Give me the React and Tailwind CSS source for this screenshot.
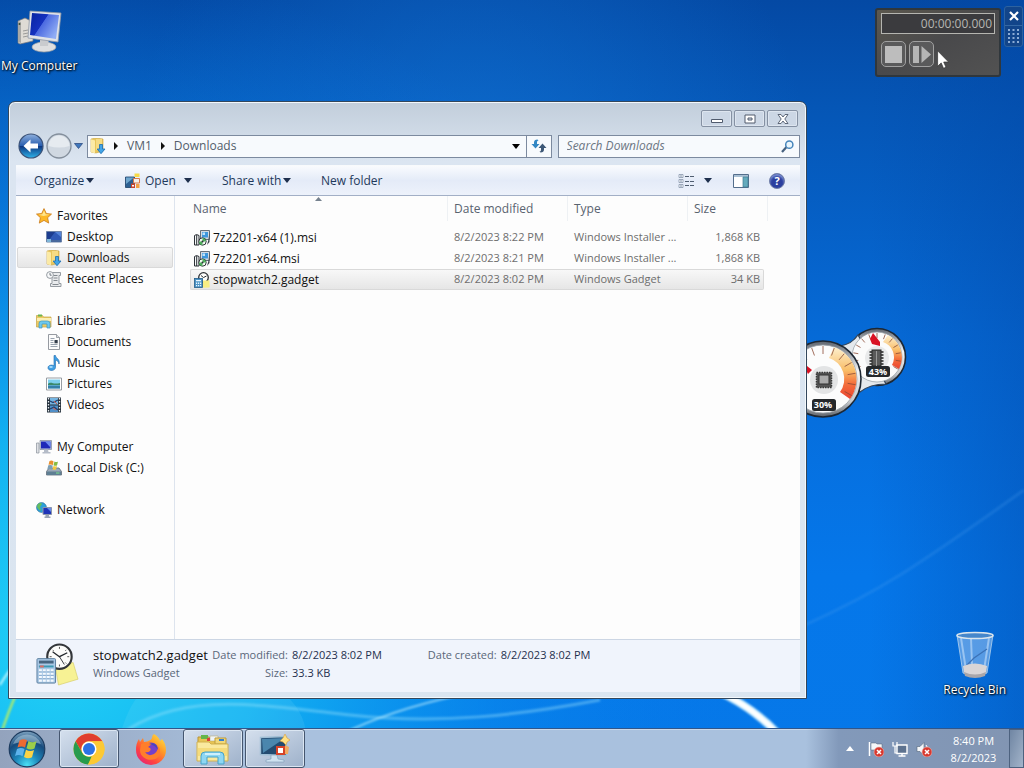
import React from "react";

const Svg = ({ box = "0 0 16 16", className = "w-4 h-4", children }) => (
  <svg viewBox={box} className={`shrink-0 ${className}`} aria-hidden="true">
    {children}
  </svg>
);

const Caret = ({ className = "text-[#1e2f4d]" }) => (
  <Svg box="0 0 8 5" className={`w-2 h-[5px] ${className}`}>
    <path d="M0 0h8L4 5z" fill="currentColor" />
  </Svg>
);

const StarIcon = () => (
  <Svg>
    <path d="M8 .6l2.3 4.9 5.2.6-3.9 3.6 1.1 5.4L8 12.4l-4.7 2.7 1.1-5.4L.5 6.1l5.2-.6z" fill="#fdb827" stroke="#c97a1c" strokeWidth=".8" />
    <path d="M8 2.5l1.6 3.8 3.9.5-6 1.2-4.8-1.2 3.7-.5z" fill="#ffe58c" />
  </Svg>
);

const DesktopIcon = () => (
  <Svg>
    <path d="M.5 2.500h15v10.500H.5z" fill="#2f59b5" stroke="#6d83a8" />
    <path d="M1 3h8L3 11H1z" fill="#1c3d8f" />
    <path d="M9 3h6v5z" fill="#5484d8" />
    <path d="M1 11h14v2H1z" fill="#49699c" />
    <path d="M1 10h4v3H1z" fill="#7fb7d9" />
  </Svg>
);

const DownloadsIcon = () => (
  <Svg>
    <path d="M1 1l5-1 7 1v12l-7 2-5-1z" fill="#e8c65c" stroke="#c9a23c" strokeWidth=".6" />
    <path d="M1 1.200l4 1.300v13L1 14z" fill="#fbeaa6" />
    <path d="M6 1h6v11H6z" fill="#f6dc84" />
    <path d="M9.500 6.500h3v4.500h2.500L11 15.700 7.200 11h2.300z" fill="#42a5e8" stroke="#1b6db0" strokeWidth=".8" />
  </Svg>
);

const RecentIcon = () => (
  <Svg>
    <path d="M5 1.500h9.500v3H13v8h2v3H4.500v-3H6v-11z" fill="#e9ebed" stroke="#8b9298" strokeWidth=".9" />
    <path d="M7.500 4.500h4M7.500 7h4M7.500 9.500h4M6.500 13.500h6" stroke="#777e85" strokeWidth=".9" />
    <circle cx="4" cy="4" r="3.400" fill="#f8f9fa" stroke="#8b9298" strokeWidth=".9" />
    <path d="M4 2v2.200h1.700" fill="none" stroke="#54606a" strokeWidth=".8" />
  </Svg>
);

const LibrariesIcon = () => (
  <Svg>
    <path d="M.5 2.500h6l1 1.500h7.500v10H.5z" fill="#eccb62" stroke="#c4a245" strokeWidth=".7" />
    <path d="M2 1.500h4v2H2z" fill="#6cb44c" />
    <path d="M1 5h14v3H1z" fill="#fbeeb4" />
    <path d="M3 15V10.500a2.500 2.500 0 012.500-2.500h6A2.500 2.500 0 0114 10.500V15h-3v-4H6v4z" fill="#6ec8ec" stroke="#3d97c2" strokeWidth=".7" />
  </Svg>
);

const DocumentIcon = () => (
  <Svg>
    <path d="M2.500.500h8l3 3v12h-11z" fill="#fcfcfc" stroke="#8a8f96" strokeWidth=".9" />
    <path d="M10.500.5v3h3" fill="#d9dde2" stroke="#8a8f96" strokeWidth=".8" />
    <path d="M4.500 4.500h4M4.500 6.500h3M4.500 8.500h3M4.500 10.500h7M4.500 12.500h7" stroke="#8d98a6" strokeWidth=".9" />
    <path d="M8.500 6h3.200v3.300H8.500z" fill="#333d4a" />
  </Svg>
);

const MusicIcon = () => (
  <Svg>
    <path d="M8 .5h1.500c.3 3 4.800 3.500 3.500 8.500-.5-2.500-1.700-3.500-3.500-3.700v7c0 4-7.500 4.200-7.500.5C2 10 6 9.500 8 10.800z" fill="#3f9fe4" stroke="#1d68ad" strokeWidth=".6" />
    <ellipse cx="5" cy="12" rx="1.800" ry="1" fill="#a6dbfb" />
  </Svg>
);

const PictureIcon = () => (
  <Svg>
    <path d="M.5 2h15v12H.5z" fill="#fff" stroke="#8c9299" strokeWidth=".9" />
    <path d="M2 3.500h12v9H2z" fill="#7ed0ee" />
    <path d="M2 8c3-3 5 1 12-1v2H2z" fill="#3c8a6b" />
    <path d="M2 9.500h12v3H2z" fill="#357fa8" />
  </Svg>
);

const VideoIcon = () => (
  <Svg>
    <path d="M1 .5h14v15H1z" fill="#26323e" />
    <path d="M4 1h8v6.500H4z" fill="#75b5e2" />
    <path d="M4 8.500h8V15H4z" fill="#4f8fc8" />
    <path d="M4 4l3 1.500L12 3M4 12l4-2 4 3" stroke="#23406e" strokeWidth="1.300" fill="none" />
    <path d="M8 4l3 3M7 11l3 2" stroke="#d55a4a" />
    <path d="M2.500 1v14M13.500 1v14" stroke="#e8edf2" strokeWidth="1.300" strokeDasharray="1.500 1.500" />
  </Svg>
);

const ComputerIcon = () => (
  <Svg>
    <path d="M.5 4h2.500v10H.5z" fill="#e0e2e6" stroke="#888f99" strokeWidth=".7" />
    <path d="M4 1.500h11.500v9H4z" fill="#c5cddc" stroke="#7c879a" strokeWidth=".7" />
    <path d="M5 2.500h9.500v7H5z" fill="#1e28b8" />
    <path d="M9 2.500h5.500v6z" fill="#6d8bef" />
    <path d="M8 10.500h4l.5 2.500h2v1.500h-8V13h1.500z" fill="#b5bcc8" />
  </Svg>
);

const DiskIcon = () => (
  <Svg>
    <path d="M3 8h10l2.500 3.500v3.500H.5v-3.500z" fill="#9ba9b8" stroke="#5c6977" strokeWidth=".8" />
    <path d="M1 11.500h14V15H1z" fill="#5f7f93" />
    <path d="M10 13h3.500" stroke="#7ee58c" />
    <path d="M3.500 1q2-1 4 .3L7 5Q5 4 2.500 4.800z" fill="#e9902f" />
    <path d="M8.500 1.500q2 1 3.500 0L11 5.500q-2 .8-3.500-.3z" fill="#86bb42" />
    <path d="M2.300 5.300q2.500-.8 4.500.3l-1 3.900q-2-1-4.500-.2z" fill="#7d9fb4" />
    <path d="M7.500 6q2 .8 3.500 0L10 9.500q-2 .8-3.500-.3z" fill="#f5c83c" />
  </Svg>
);

const NetworkIcon = () => (
  <Svg>
    <circle cx="5.500" cy="5.500" r="5" fill="#2c9fd9" stroke="#276589" strokeWidth=".5" />
    <path d="M2 2q3-2 4 0L4 5l1 4Q1 7 1 4z" fill="#65be5e" />
    <path d="M7 5.500h8.500v7H7z" fill="#1f34b8" stroke="#8c96ab" />
    <path d="M11 6h4v4z" fill="#668bec" />
    <path d="M9.500 13h3.500v1.500h1.500V16h-6v-1.500h1z" fill="#9aa4b4" />
  </Svg>
);

const InstallerIcon = () => (
  <Svg>
    <path d="M6.500.500h9v9h-9z" fill="#d4dbe3" stroke="#59636d" strokeWidth=".9" />
    <path d="M8 2h6v5.500H8z" fill="#3f97dc" />
    <path d="M8.500 2.500h2.500v2.500H8.500z" fill="#bfe2fa" />
    <path d="M14.500 9.500l1-8.500v11l-2.500 3" fill="#3d454e" />
    <path d="M.5 5.500l2-1 2.500 1v9.500H.5z" fill="#f6f7f8" stroke="#2b3036" strokeWidth="1" />
    <path d="M2.700 5v10" stroke="#2b3036" strokeWidth="1" />
    <circle cx="8.500" cy="11.500" r="3.700" fill="#f3faf2" stroke="#2b3036" strokeWidth="1" />
    <path d="M8.500 8a3.500 3.500 0 013.500 3.500H8.500zM8.500 15a3.500 3.500 0 01-3.500-3.500h3.500z" fill="#4eb05c" />
    <circle cx="8.500" cy="11.500" r="1" fill="#2b3036" />
  </Svg>
);

const GadgetArt = ({ className }) => (
  <Svg box="0 0 44 44" className={className}>
    <path d="M20 25l18-5 5 17-20 6z" fill="#f7f294" stroke="#d7cf6c" strokeWidth=".7" />
    <circle cx="24" cy="14" r="12.500" fill="#fcfcfa" stroke="#33363a" strokeWidth="2.200" />
    <path d="M24 4v2M24 22v2M14 14h2M32 14h2M17 7l1 1M31 7l-1 1M31 21l-1-1" stroke="#555" strokeWidth="1" />
    <path d="M17 9l7 5 8-4" fill="none" stroke="#22262b" strokeWidth="1.300" />
    <path d="M24 14l5 8" stroke="#22262b" strokeWidth=".9" />
    <rect x="1" y="16" width="19" height="25" rx="1" fill="#a9c8e6" stroke="#5c7f9f" strokeWidth="1" />
    <path d="M3 18h15v3H3z" fill="#46647f" />
    <path d="M3 23h15v2H3z" fill="#3d99b3" />
    <path d="M4 23h4v2H4z" fill="#db6e64" />
    <path d="M3 28h15M3 31.500h15M3 35h15M3 38.500h15" stroke="#f4f9fe" strokeWidth="2.300" strokeDasharray="3 1" />
    <path d="M3 29.500h15M3 33h15M3 36.500h15" stroke="#6f94b8" strokeWidth=".6" strokeDasharray="3 1" />
  </Svg>
);

const GadgetSmall = () => (
  <Svg>
    <path d="M8 8h6.500l1 7-7 .5z" fill="#f7ee83" />
    <circle cx="9.500" cy="5.500" r="4.800" fill="#fdfdfb" stroke="#2b2f34" strokeWidth="1.300" />
    <path d="M7 3.500l2.500 2 3-1.500" fill="none" stroke="#2b2f34" />
    <path d="M9 8.500h6.500v7H9z" fill="#f7ee83" />
    <rect x=".5" y="6.500" width="8" height="9" fill="#4d94c6" stroke="#235d88" strokeWidth=".8" />
    <path d="M2 8h5v1.300H2zM2 10.500h1.200V12H2zM4 10.500h1.200V12H4zM6 10.500h1.200V12H6zM2 13h1.200v1.300H2zM4 13h1.200v1.300H4zM6 13h1.200v1.300H6z" fill="#e7f6ff" />
  </Svg>
);

const OpenIcon = () => (
  <Svg>
    <path d="M.5 4h9v10.500h-9z" fill="#2c5f92" stroke="#1c4068" strokeWidth=".8" />
    <path d="M1 4.500h8L1 11z" fill="#6ea5cd" />
    <path d="M9.500.500h5V4h-5z" fill="#f6da4a" />
    <path d="M8.500 5.500h6v4.500h-6z" fill="#f4f1ee" stroke="#d97a4a" strokeWidth="1" />
    <path d="M6 10.500h4V15H6z" fill="#c7432f" />
    <path d="M11 11h3.500v4H11z" fill="#f4a245" />
    <path d="M7 12h2v1.500H7z" fill="#fff" />
  </Svg>
);

const treeSections = [
  { label: "Favorites", Icon: StarIcon, items: [
    { label: "Desktop", Icon: DesktopIcon },
    { label: "Downloads", Icon: DownloadsIcon, active: true },
    { label: "Recent Places", Icon: RecentIcon },
  ] },
  { label: "Libraries", Icon: LibrariesIcon, items: [
    { label: "Documents", Icon: DocumentIcon },
    { label: "Music", Icon: MusicIcon },
    { label: "Pictures", Icon: PictureIcon },
    { label: "Videos", Icon: VideoIcon },
  ] },
  { label: "My Computer", Icon: ComputerIcon, items: [{ label: "Local Disk (C:)", Icon: DiskIcon }] },
  { label: "Network", Icon: NetworkIcon, items: [] },
];

const files = [
  { name: "7z2201-x64 (1).msi", date: "8/2/2023 8:22 PM", type: "Windows Installer ...", size: "1,868 KB", Icon: InstallerIcon },
  { name: "7z2201-x64.msi", date: "8/2/2023 8:21 PM", type: "Windows Installer ...", size: "1,868 KB", Icon: InstallerIcon },
  { name: "stopwatch2.gadget", date: "8/2/2023 8:02 PM", type: "Windows Gadget", size: "34 KB", Icon: GadgetSmall, selected: true },
];

function Wallpaper() {
  return (
    <svg className="absolute inset-0 w-full h-full" viewBox="0 0 1024 768" preserveAspectRatio="none" aria-hidden="true">
      <defs>
        <linearGradient id="base" x1="0" y1="0" x2="0" y2="1">
          <stop offset="0" stopColor="#0449a4" />
          <stop offset=".14" stopColor="#0556b6" />
          <stop offset=".45" stopColor="#066bd8" />
          <stop offset=".75" stopColor="#0577ea" />
          <stop offset="1" stopColor="#0678e8" />
        </linearGradient>
        <radialGradient id="cyan" gradientUnits="userSpaceOnUse" cx="60" cy="640" r="680">
          <stop offset="0" stopColor="#22d3f6" />
          <stop offset=".3" stopColor="#14b9f3" stopOpacity=".9" />
          <stop offset=".65" stopColor="#0a90ee" stopOpacity=".45" />
          <stop offset="1" stopColor="#0678e8" stopOpacity="0" />
        </radialGradient>
        <radialGradient id="mid" gradientUnits="userSpaceOnUse" cx="470" cy="170" r="340">
          <stop offset="0" stopColor="#1379dc" stopOpacity=".55" />
          <stop offset="1" stopColor="#1379dc" stopOpacity="0" />
        </radialGradient>
        <linearGradient id="edge" x1="0" x2="1" y1="0" y2="0">
          <stop offset=".85" stopColor="#0246a4" stopOpacity="0" />
          <stop offset="1" stopColor="#0246a4" stopOpacity=".4" />
        </linearGradient>
        <filter id="soft"><feGaussianBlur stdDeviation="1.200" /></filter>
      </defs>
      <rect width="1024" height="768" fill="url(#base)" />
      <rect width="1024" height="768" fill="url(#mid)" />
      <rect width="1024" height="768" fill="url(#cyan)" />
      <rect width="1024" height="768" fill="url(#edge)" />
      <g fill="none" filter="url(#soft)">
        <path d="M120 735C180 690 260 705 350 715S520 715 600 700" stroke="#a3e6fc" strokeOpacity=".4" strokeWidth="3" />
        <path d="M340 735Q390 710 460 695" stroke="#c6f1ff" strokeOpacity=".6" strokeWidth="2" />
        <path d="M805 625Q860 600 900 575T1024 490" stroke="#52a6f3" strokeOpacity=".22" strokeWidth="3" />
        <path d="M700 684Q746 700 779 735" stroke="#d9f5ff" strokeWidth="8" />
        <path d="M700 684Q746 700 779 735" stroke="#fff" strokeWidth="4" />
        <path d="M0 737Q8 712 18 690" stroke="#bff05c" strokeWidth="2" />
        <path d="M0 685Q5 676 14 665" stroke="#b6f3ff" strokeWidth="2" />
      </g>
      <path d="M120 735Q130 700 145 690H280Q305 710 306 735z" fill="#7fe0fb" fillOpacity=".15" />
    </svg>
  );
}

function Ticks({ cx, cy, r, len }) {
  return Array.from({ length: 13 }, (_, i) => {
    const a = ((150 + i * 20) * Math.PI) / 180;
    const c = Math.cos(a);
    const s = Math.sin(a);
    return <line key={i} x1={cx + c * r} y1={cy + s * r} x2={cx + c * (r - len)} y2={cy + s * (r - len)} stroke="#8a4a35" strokeWidth=".8" />;
  });
}

function CpuMeter() {
  return (
    <svg viewBox="0 0 128 98" className="absolute right-[116px] top-[324px] w-32 h-[98px]" role="img" aria-label="CPU Meter">
      <defs>
        <linearGradient id="chrome" x1="0" y1="0" x2="0" y2="1">
          <stop offset="0" stopColor="#5d646e" />
          <stop offset=".4" stopColor="#f4f6f8" />
          <stop offset=".8" stopColor="#c4c8cc" />
          <stop offset="1" stopColor="#5c6168" />
        </linearGradient>
        <linearGradient id="heat" x1="0" y1="0" x2="0" y2="1">
          <stop offset="0" stopColor="#fdf0cf" />
          <stop offset=".45" stopColor="#f9bd67" />
          <stop offset=".7" stopColor="#f4703c" />
          <stop offset="1" stopColor="#ea4331" />
        </linearGradient>
      </defs>
      <circle cx="97" cy="33" r="28.500" fill="url(#chrome)" stroke="#1d2733" strokeWidth="1.600" />
      <path d="M60 22Q72 20 78 11L106 60Q90 60 80 68z" fill="#e4e8ec" stroke="#34465c" strokeWidth="1.200" />
      <circle cx="97" cy="33" r="25" fill="#fbfbfb" stroke="#9199a0" strokeWidth=".7" />
      <path d="M108 11A25 25 0 01119 45l-7-4A16 16 0 00103 18z" fill="url(#heat)" />
      <Ticks cx={97} cy={33} r={24} len={5} />
      <path d="M93 9l7 9v4l-8-2-2-5z" fill="#d91224" />
      <circle cx="97" cy="34" r="12" fill="#e9eaeb" />
      <path d="M89.500 28h14M89.500 31h14M89.500 34h14M89.500 37h14M89.500 40h14" stroke="#222" strokeWidth="1.400" />
      <rect x="92" y="26" width="9" height="16" fill="#5a5a5a" stroke="#262626" />
      <path d="M96.500 27v15" stroke="#999" />
      <rect x="86" y="42" width="24" height="11" rx="2.500" fill="#25282b" />
      <text x="98" y="51" textAnchor="middle" className="font-['Open_Sans',sans-serif] font-bold text-[9px]" fill="#fff">43%</text>
      <circle cx="43" cy="55" r="38" fill="url(#chrome)" stroke="#1d2733" strokeWidth="1.600" />
      <circle cx="43" cy="55" r="34" fill="#fcfcfc" stroke="#9ba1a7" strokeWidth=".8" />
      <path d="M54 23A34 34 0 0170 75l-10-7A22 22 0 0049 34z" fill="url(#heat)" />
      <Ticks cx={43} cy={55} r={33} len={8} />
      <path d="M22 38l10 8-4 4z" fill="#d91224" />
      <circle cx="44" cy="56" r="14" fill="#e3e4e5" />
      <rect x="36.500" y="48.500" width="15" height="15" fill="#555" stroke="#3a3a3a" strokeWidth="1.500" strokeDasharray="1.500 1" />
      <rect x="39" y="51" width="10" height="9" fill="#aaa" stroke="#333" />
      <rect x="32" y="75" width="24" height="12" rx="2.500" fill="#25282b" />
      <text x="43" y="84" textAnchor="middle" className="font-['Open_Sans',sans-serif] font-bold text-[9px]" fill="#fff">30%</text>
    </svg>
  );
}

function Stopwatch() {
  return (
    <section aria-label="Stopwatch" className="absolute top-[6px] right-[1px] flex items-start gap-[3px]">
      <div className="mt-[2px] w-[126px] h-[69px] rounded-[3px] border-2 border-[#30373c] bg-linear-to-br from-[#5c584e] via-[#49494b] to-[#525252] px-1 pt-[3px] flex flex-col gap-[7px]">
        <output className="h-[21px] border border-[#b5b5b0] bg-[#3b3b3e] text-right text-[12px] leading-[19px] pr-[2px] text-[#b6b6b2]">00:00:00.000</output>
        <div className="flex gap-[3px]">
          <button aria-label="Reset" className="w-[25px] h-[26px] rounded-[5px] border border-[#a0a0a0] bg-[#5a5a5b] flex items-center justify-center">
            <Svg box="0 0 17 17" className="w-[17px] h-[17px]"><path d="M0 0h17v17H0z" fill="#bdbdbd" /></Svg>
          </button>
          <button aria-label="Start or pause" className="w-[25px] h-[26px] rounded-[5px] border border-[#a0a0a0] bg-[#5a5a5b] flex items-center justify-center">
            <Svg box="0 0 18 17" className="w-[18px] h-[17px]"><path d="M0 0h6v17H0zM8.500 0L18 8.500 8.500 17z" fill="#b5b5b5" /></Svg>
          </button>
        </div>
      </div>
      <div className="w-[19px] rounded-[3px] border border-[#2d629f] bg-[#12458a]">
        <button aria-label="Close gadget" className="flex w-full h-[19px] items-center justify-center border-b border-[#3468a4]">
          <Svg box="0 0 10 10" className="w-[10px] h-[10px]"><path d="M1 1l8 8M9 1L1 9" stroke="#fff" strokeWidth="2.200" /></Svg>
        </button>
        <div className="flex h-5 items-center justify-center">
          <Svg box="0 0 11 14" className="w-[11px] h-[14px]"><path d="M0 1h11M0 5h11M0 9h11M0 13h11" stroke="#8bacd5" strokeWidth="2" strokeDasharray="2 2.500" /></Svg>
        </div>
      </div>
    </section>
  );
}

const desktopLabel = "text-[12px] leading-4 text-white text-center whitespace-nowrap [text-shadow:1px_1px_2px_#000,0_0_2px_#000]";

function TitleBar() {
  const button = "w-[31px] h-[17px] rounded-[2px] border border-[#8591a3] bg-[#ccd7e5] flex items-center justify-center shadow-[inset_0_0_0_1px_#dde5ef]";
  return (
    <header className="flex justify-end gap-[2px] pt-2 pr-[2px] h-8">
      <button aria-label="Minimize" className={button}><Svg box="0 0 12 10" className="w-3 h-[10px]"><path d="M.5 5.500h11v3H.5z" fill="#fff" stroke="#505b6d" /></Svg></button>
      <button aria-label="Restore" className={button}><Svg box="0 0 12 10" className="w-3 h-[10px]"><path d="M1 1h10v8H1z" fill="#fff" stroke="#505b6d" /><path d="M4 4h4v2H4z" fill="#d5dfeb" stroke="#505b6d" /></Svg></button>
      <button aria-label="Close" className={button}><Svg box="0 0 12 10" className="w-3 h-[10px]"><path d="M1 .5h3l2 2.500 2-2.500h3L7.800 5 11 9.500H8L6 7 4 9.500H1L4.200 5z" fill="#fff" stroke="#505b6d" strokeWidth=".9" /></Svg></button>
    </header>
  );
}

function NavRow() {
  return (
    <div className="flex items-center gap-[6px] h-6 pl-[2px]">
      <div className="flex items-center">
        <button aria-label="Back">
          <Svg box="0 0 26 26" className="w-[26px] h-[26px]">
            <defs>
              <linearGradient id="backFill" x1="0" y1="0" x2="0" y2="1">
                <stop offset="0" stopColor="#8fb0dd" /><stop offset=".48" stopColor="#2a5fb0" />
                <stop offset=".5" stopColor="#0b337f" /><stop offset="1" stopColor="#2fb4ea" />
              </linearGradient>
            </defs>
            <circle cx="13" cy="13" r="12" fill="url(#backFill)" stroke="#3c5378" strokeWidth="1.200" />
            <path d="M12.500 6.500v4H20v5h-7.500v4L5.500 13z" fill="#fff" />
          </Svg>
        </button>
        <button aria-label="Forward" className="ml-[2px]">
          <Svg box="0 0 26 26" className="w-[26px] h-[26px]">
            <circle cx="13" cy="13" r="12" fill="#d0d8e1" stroke="#848f9c" strokeWidth="1.300" />
            <path d="M2.500 13a10.500 10.500 0 0121 0q-10 3-21 0z" fill="#e6ebf0" />
          </Svg>
        </button>
        <button aria-label="Recent pages" className="ml-[2px] flex w-[9px] justify-center"><Svg box="0 0 9 6" className="w-[9px] h-[6px]"><path d="M.5.500h8L4.500 5.500z" fill="#3e77bd" stroke="#2d4d83" strokeWidth=".8" /></Svg></button>
      </div>
      <div className="-ml-[2px] flex-1 min-w-0 h-[23px] flex items-center border border-[#7c8a9f] bg-[#f7fafd] text-[#525d6b] text-[12px]">
        <div className="flex flex-1 items-center pl-[2px]">
          <DownloadsIcon />
          <Svg box="0 0 4 8" className="w-1 h-2 ml-2 mr-[9px]"><path d="M0 0l4 4-4 4z" fill="#111" /></Svg>
          <a href="#vm1">VM1</a>
          <Svg box="0 0 4 8" className="w-1 h-2 mx-[9px]"><path d="M0 0l4 4-4 4z" fill="#111" /></Svg>
          <a href="#downloads">Downloads</a>
        </div>
        <button aria-label="Previous locations" className="w-5 flex justify-center"><Caret className="text-black" /></button>
        <button aria-label="Refresh" className="w-[25px] h-full border-l border-[#7c8a9f] flex items-center justify-center">
          <Svg box="0 0 16 14" className="w-4 h-[14px]">
            <path d="M6.500.500Q3 .5 3 3.500V5H.5L4.500 9.500 8.500 5H6V3q0-1.500 1.500-1.500z" fill="#3287c4" />
            <path d="M9.500 13.500q3.500 0 3.500-3V9h2.500l-4-4.500-4 4.500H10v2q0 1.500-1.500 1.500z" fill="#3d5877" />
          </Svg>
        </button>
      </div>
      <label className="w-[31%] shrink-0 h-[23px] flex items-center border border-[#7c8a9f] bg-[#f7fafd] pl-2 pr-[5px]">
        <input type="search" aria-label="Search Downloads" placeholder="Search Downloads" className="min-w-0 flex-1 bg-transparent outline-none text-[12px] italic placeholder:text-[#6c7683]" />
        <Svg box="0 0 13 13" className="w-[13px] h-[13px]"><path d="M1 12l4.500-5" stroke="#46617f" strokeWidth="2.200" /><circle cx="8.300" cy="4.700" r="3.600" fill="#e9f5fc" stroke="#4685bb" strokeWidth="1.500" /></Svg>
      </label>
    </div>
  );
}

function Toolbar() {
  return (
    <div role="toolbar" aria-label="Folder tools" className="mt-[7px] flex h-[31px] items-center border-t border-[#f8fafc] border-b border-b-[#a2afc6] bg-linear-to-b from-[#f9fbfe] via-[#e4ebf8] to-[#edf2fb] pl-[18px] pr-[15px] text-[12px] text-[#1e395b] whitespace-nowrap">
      <button className="flex items-center gap-[2px] w-[91px]">Organize <Caret /></button>
      <button className="flex items-center w-[97px]"><OpenIcon /><span className="ml-1 mr-2">Open</span><Caret /></button>
      <button className="flex items-center gap-[2px] w-[99px]">Share with <Caret /></button>
      <button>New folder</button>
      <div className="flex-1" />
      <button aria-label="Change your view" className="flex items-center gap-[10px]">
        <Svg box="0 0 16 14" className="w-4 h-[14px]">
          <path d="M1 .5h4v3H1zM1 5.500h4v3H1zM1 10.500h4v3H1z" fill="#fff" stroke="#8696ab" strokeWidth=".8" />
          <path d="M3 1.500v1M3 6.500v1M3 11.500v1" stroke="#325178" strokeWidth="1.300" />
          <path d="M7 2.500h9M7 7.500h9M7 11.500h9" stroke="#4f5d70" strokeDasharray="4 1" />
        </Svg>
        <Caret />
      </button>
      <button aria-label="Show the preview pane" className="ml-[21px]">
        <Svg box="0 0 16 14" className="w-4 h-[14px]">
          <path d="M.5.500h15v13H.5z" fill="#fff" stroke="#546e8c" />
          <path d="M1 1h14v2H1z" fill="#a9c0d4" />
          <path d="M10 3h5v10h-5z" fill="#64abbd" stroke="#3f7c94" strokeWidth=".7" />
        </Svg>
      </button>
      <button aria-label="Help" className="ml-5 flex w-4 h-4 items-center justify-center rounded-full border border-[#7482aa] bg-[#2b3f9f] text-[11px] leading-none font-bold text-white shadow-[inset_0_2px_2px_#7b8fd3]">?</button>
    </div>
  );
}

function TreeLink({ label, Icon, active, child }) {
  return (
    <a href={`#${label.toLowerCase().replace(/[^a-z]+/g, "-")}`} className={`flex items-center gap-[5px] h-[21px] mx-[1px] border rounded-[2px] whitespace-nowrap ${child ? "pl-7" : "pl-[18px]"} ${active ? "border-[#d9d9d9] bg-linear-to-b from-[#f8f8f8] to-[#e6e6e6]" : "border-transparent"}`}>
      <Icon />
      <span>{label}</span>
    </a>
  );
}

function Explorer() {
  return (
    <section aria-label="Downloads" className="absolute left-2 right-[217px] top-[101px] bottom-[29px] flex flex-col rounded-t-[7px] border border-[#33475c] bg-linear-to-b from-[#c2cedb] via-[#dbe5f1] via-10% to-[#dae5f0] pl-[7px] pr-[6px] pb-[6px] shadow-[inset_0_0_0_1px_#f3f8fc]">
      <TitleBar />
      <NavRow />
      <Toolbar />
      <div className="flex flex-1 min-h-0 bg-[#fdfdfd] text-[12px]">
        <nav aria-label="Navigation pane" className="w-[159px] shrink-0 border-r border-[#dde4ee] pt-[9px] flex flex-col gap-[21px] text-[#111]">
          {treeSections.map((section) => (
            <div key={section.label}>
              <TreeLink label={section.label} Icon={section.Icon} />
              {section.items.map((item) => <TreeLink key={item.label} {...item} child />)}
            </div>
          ))}
        </nav>
        <div className="flex-1 min-w-0 pl-[15px]">
          <table className="table-fixed border-separate border-spacing-0 w-[578px] text-left whitespace-nowrap text-[#6d6d6d]">
            <colgroup>
              <col className="w-[258px]" /><col className="w-[120px]" /><col className="w-[120px]" /><col className="w-[76px]" /><col className="w-1" />
            </colgroup>
            <thead>
              <tr className="h-[25px] text-[#596370]">
                <th className="relative font-normal pl-[3px] border-r border-[#eef1f4]" aria-sort="ascending">
                  Name
                  <svg viewBox="0 0 7 4" className="absolute top-[1px] inset-x-0 mx-auto w-[7px] h-1" aria-hidden="true"><path d="M0 4l3.500-4L7 4z" fill="#76818e" /></svg>
                </th>
                <th className="font-normal pl-[6px] border-r border-[#eef1f4]">Date modified</th>
                <th className="font-normal pl-[6px] border-r border-[#eef1f4]">Type</th>
                <th className="font-normal pl-[6px] border-r border-[#eef1f4]" colSpan={2}>Size</th>
              </tr>
            </thead>
            <tbody className="text-[11px] before:block before:h-[6px] before:content-['']">
              {files.map(({ name, date, type, size, Icon, selected }) => {
                const cell = selected ? "border-[#d9d9d9] bg-linear-to-b from-[#f8f8f8] to-[#e6e6e6]" : "border-transparent";
                return (
                  <tr key={name} className="h-[21px]" aria-selected={!!selected}>
                    <td className={`${cell} border-y border-l rounded-l-[2px] p-0 pl-[3px]`}>
                      <div className="flex items-center gap-[3px] text-[12px] leading-4 text-[#111]"><Icon /><span>{name}</span></div>
                    </td>
                    <td className={`${cell} border-y p-0 pl-[6px]`}>{date}</td>
                    <td className={`${cell} border-y p-0 pl-[6px]`}>{type}</td>
                    <td className={`${cell} border-y border-r rounded-r-[2px] p-0 pr-[3px] text-right`}>{size}</td>
                    <td className="p-0" />
                  </tr>
                );
              })}
            </tbody>
          </table>
        </div>
      </div>
      <footer className="flex h-[53px] items-start gap-[14px] border-t border-[#ccd6e4] bg-[#f0f4fc] pl-5 pt-[3px] text-[11px] leading-[18px] text-[#5a6779] whitespace-nowrap">
        <GadgetArt className="w-[43px] h-[43px]" />
        <div className="flex gap-[6px] pt-[3px]">
          <div className="w-[111px]">
            <p className="text-[13px] text-[#111]">stopwatch2.gadget</p>
            <p>Windows Gadget</p>
          </div>
          <dl className="grid grid-cols-[78px_auto] content-start gap-x-1">
            <dt className="text-right">Date modified:</dt><dd className="text-[#1e2f4d]">8/2/2023 8:02 PM</dd>
            <dt className="text-right">Size:</dt><dd className="text-[#1e2f4d]">33.3 KB</dd>
          </dl>
          <dl className="ml-10 flex gap-1">
            <dt>Date created:</dt><dd className="text-[#1e2f4d]">8/2/2023 8:02 PM</dd>
          </dl>
        </div>
      </footer>
    </section>
  );
}

const StartOrb = () => (
  <Svg box="0 0 38 38" className="w-[38px] h-[38px]">
    <defs>
      <radialGradient id="orb" cx=".5" cy=".95" r=".95">
        <stop offset="0" stopColor="#4be0f5" /><stop offset=".35" stopColor="#1c88bb" />
        <stop offset=".7" stopColor="#174b7d" /><stop offset="1" stopColor="#7ea3c0" />
      </radialGradient>
    </defs>
    <circle cx="19" cy="19" r="17.800" fill="url(#orb)" stroke="#1d3c60" strokeWidth="1.200" />
    <path d="M5 14a15 15 0 0128 0q-14-5-28 0z" fill="#c4dbe9" fillOpacity=".45" />
    <path d="M11.500 10.500q4-2.500 7.500-.3l-2 7.300q-3.500-2-7.500 0z" fill="#ed6a32" />
    <path d="M20.500 11q3.500 2.300 8 .3l-2 7.200q-4 2-8-.3z" fill="#9cce4a" />
    <path d="M9 19q4-2 7.500 0l-2 7.300q-3.500-2.300-7.500-.3z" fill="#5db3ec" />
    <path d="M18 19.700q4 2.300 8 .3l-2 7.300q-4 2-8-.3z" fill="#fbd446" />
  </Svg>
);

const ChromeLogo = () => (
  <Svg box="0 0 32 32" className="w-8 h-8">
    <circle cx="16" cy="16" r="15.500" fill="#fcc934" />
    <path d="M2.600 8.200A15.500 15.500 0 0129.400 8.300H16a7.700 7.700 0 00-6.700 11.500z" fill="#e03e2f" />
    <path d="M2.600 8.200l6.700 11.700A7.700 7.700 0 0016 23.700q1.500 0 2.700-.5L15 31.500A15.500 15.500 0 012.600 8.200z" fill="#279b4d" />
    <path d="M15 31.500l7.700-11.700A7.700 7.700 0 0016 8.300h13.400A15.500 15.500 0 0115 31.500z" fill="#fcc934" />
    <circle cx="16" cy="16" r="7.500" fill="#fff" /><circle cx="16" cy="16" r="6" fill="#2c72e3" />
  </Svg>
);

const FirefoxLogo = () => (
  <Svg box="0 0 32 32" className="w-8 h-8">
    <defs>
      <linearGradient id="fire" x1="1" y1="0" x2=".2" y2="1">
        <stop offset="0" stopColor="#fff04a" /><stop offset=".4" stopColor="#ff9a26" />
        <stop offset=".75" stopColor="#ff4140" /><stop offset="1" stopColor="#e3247b" />
      </linearGradient>
    </defs>
    <path d="M19 1q5 3 6 7l2-2q4 5 4 11a15 15 0 01-30 0Q1 10 4 6l1 3 3-4 1 4q7-1 8-4 0-3 2-4z" fill="url(#fire)" />
    <circle cx="16" cy="17" r="7.500" fill="#7540c9" />
    <path d="M6 11q6-3 11 0l-4 3q4 1 2 4-2 2-5 1 3 5 9 2 5-3 3-9 5 5 2 11c-5 7-19 4-19-6z" fill="#ff7e2b" />
    <path d="M14 11q8-3 9 6-3-5-9-6z" fill="#4b45bd" />
  </Svg>
);

const FoldersLogo = () => (
  <Svg box="0 0 34 32" className="w-[34px] h-8">
    <path d="M2 4h11l2 3h13v20H2z" fill="#e8c454" stroke="#b99535" />
    <path d="M5 2h7v4H5z" fill="#65b64a" /><path d="M14 3h8v5h-8z" fill="#eef4f8" stroke="#b5a35d" strokeWidth=".5" />
    <path d="M11 5h3v3h-3z" fill="#d9443b" /><path d="M19 5h11v6H19z" fill="#f2d879" stroke="#bd9b3d" />
    <path d="M23 6h5v2h-5z" fill="#357fcb" />
    <path d="M1 9h12l2 2h17v17H1z" fill="#fae99f" stroke="#d1b14e" />
    <path d="M2 15h29v8H2z" fill="#f5db7b" />
    <path d="M5 31v-8q0-4 4-4h15q4 0 4 4v8h-6v-7H11v7z" fill="#8ed7f3" stroke="#44a3ca" />
    <path d="M9 21h15" stroke="#e3f9ff" strokeWidth="1.500" />
  </Svg>
);

const GadgetsLogo = () => (
  <Svg box="0 0 32 32" className="w-8 h-8">
    <path d="M1.500 4.500l26-1v19l-26-1z" fill="#234b70" stroke="#9fbfd5" strokeWidth="1.400" />
    <path d="M3 6l23-1L4 20z" fill="#4a86ad" />
    <path d="M12 22h6l1 4 6 1v2H7v-2l5-1z" fill="#cfe2f0" stroke="#7c9cb7" strokeWidth=".6" />
    <path d="M26 1l2 4 3 2-3 2-1 3-3-3-3-1 3-3z" fill="#ffe184" stroke="#de9e3a" strokeWidth=".6" />
    <path d="M18 14h7v7h-7z" fill="#fff" stroke="#d64328" strokeWidth="2" />
    <path d="M26 12l4 2-1 7h-3z" fill="#f1aa61" />
  </Svg>
);

const RedX = () => (
  <g>
    <circle cx="11" cy="11" r="5" fill="#d8392f" stroke="#f1b6b0" strokeWidth=".6" />
    <path d="M9 9l4 4M13 9l-4 4" stroke="#fff" strokeWidth="1.500" />
  </g>
);

function Taskbar() {
  const open = "border-[#45566f] bg-linear-to-br from-[#d5e0ee] to-[#9eb1ca] shadow-[inset_0_0_0_1px_#dbe6f2]";
  const apps = [
    { label: "Google Chrome", Icon: ChromeLogo, running: true },
    { label: "Firefox", Icon: FirefoxLogo },
    { label: "Windows Explorer", Icon: FoldersLogo, running: true },
    { label: "Desktop Gadget Gallery", Icon: GadgetsLogo, running: true },
  ];
  return (
    <footer className="relative flex h-10 shrink-0 items-center border-t border-[#31568a] bg-linear-to-r from-[#93a3bd] via-[#a9c1de] via-25% to-[#a9c1de] text-white shadow-[inset_0_1px_0_#c9d8ea]">
      <button aria-label="Start" className="ml-2"><StartOrb /></button>
      <div className="ml-[13px] flex gap-[2px] h-full flex-1">
        {apps.map(({ label, Icon, running }) => (
          <button key={label} aria-label={label} className={`w-[60px] h-full flex items-center justify-center rounded-[3px] border ${running ? open : "border-transparent"}`}><Icon /></button>
        ))}
      </div>
      <div className="flex h-full items-center bg-linear-to-r from-transparent via-[#8299ba] via-15% to-[#8295b2] pl-10">
        <button aria-label="Show hidden icons"><Svg box="0 0 8 5" className="w-2 h-[5px]"><path d="M4 0l4 5H0z" fill="#fff" /></Svg></button>
        <div className="ml-[14px] flex gap-2">
          <Svg><path d="M1.500 1v14" stroke="#fff" strokeWidth="1.500" /><path d="M3 2h5l1 1h5v7H9L8 9H3z" fill="#f5f7f9" stroke="#506076" strokeWidth=".5" /><RedX /></Svg>
          <Svg><path d="M5 4h10v8.500H5z" fill="#5d728f" stroke="#fff" strokeWidth="1.400" /><path d="M10 12v3M6.500 15h7" stroke="#fff" strokeWidth="1.400" /><path d="M1 1v4h4V1M3 5v7h2" fill="none" stroke="#fff" strokeWidth="1.200" /></Svg>
          <Svg><path d="M1 5.500h3L8 1.500v13l-4-4H1z" fill="#f5f7f9" stroke="#53647b" strokeWidth=".6" /><path d="M10 4q2 2 1 5" fill="none" stroke="#fff" /><RedX /></Svg>
        </div>
        <time dateTime="2023-08-02T20:40" className="w-[77px] pl-[6px] text-center text-[11px] leading-[17px]">8:40 PM<br />8/2/2023</time>
        <button aria-label="Show desktop" className="w-[15px] h-full border border-[#4d627f] bg-linear-to-br from-[#7086a3] to-[#a3b4ca]" />
      </div>
    </footer>
  );
}

export default function App() {
  return (
    <div className="relative flex h-screen min-h-[600px] flex-col overflow-hidden font-['Open_Sans','Noto_Sans',sans-serif]">
      <Wallpaper />
      <main className="relative flex-1 min-h-0">
        <a href="#my-computer" className="absolute left-[1px] top-[9px] flex flex-col items-center gap-[3px]">
          <Svg box="0 0 48 46" className="w-12 h-[46px]">
            <defs><linearGradient id="screen" x1="0" y1="0" x2="1" y2=".6"><stop offset="0" stopColor="#0724a0" /><stop offset=".48" stopColor="#1531bf" /><stop offset=".5" stopColor="#4b69e0" /><stop offset="1" stopColor="#8facf5" /></linearGradient></defs>
            <path d="M3 12l7-3 8 4v19L5 35l-2-1z" fill="#dedbd5" stroke="#77787c" strokeWidth=".7" />
            <path d="M3 12l3 1v21l-3-1z" fill="#a8a8a6" /><circle cx="4.500" cy="15" r="1" fill="#3b4c31" />
            <path d="M8 22l5-1M8 25l5-1M8 28l5-1" stroke="#9b9b99" />
            <ellipse cx="29" cy="38" rx="12" ry="5" fill="#dedfe0" stroke="#9b9da1" strokeWidth=".7" />
            <path d="M25 29h9l-1 8h-8z" fill="#c9cbce" />
            <path d="M15 2l31 2-3 29-30-4z" fill="#e0e3e8" stroke="#8f97a5" strokeWidth=".8" />
            <path d="M17 4l27 2-3 24-26-4z" fill="url(#screen)" />
          </Svg>
          <span className={desktopLabel}>My Computer</span>
        </a>
        <Stopwatch />
        <CpuMeter />
        <Explorer />
        <a href="#recycle-bin" className="absolute right-[18px] bottom-[30px] flex flex-col items-center gap-[2px]">
          <Svg box="0 0 40 50" className="w-10 h-[50px]">
            <path d="M2 5h36l-6 38q-12 6-24 0z" fill="#8fbdee" fillOpacity=".6" stroke="#b7d4ee" strokeWidth=".8" />
            <path d="M6 8l5 32M34 8l-5 32M16 8l1 27" stroke="#d9ecfd" strokeOpacity=".5" strokeWidth="2" />
            <path d="M32 19L19 28l-9 9" fill="none" stroke="#3c72b7" strokeWidth="1.300" />
            <path d="M8 36q12-5 24 0l-1 7q-11 6-22 0z" fill="#d9d5d6" /><path d="M9 42q11 5 22 0l-1 4q-10 4-20 0z" fill="#a9a6aa" />
            <ellipse cx="20" cy="5.500" rx="18" ry="3" fill="#4687cb" stroke="#dbe5ed" strokeWidth="1.500" />
          </Svg>
          <span className={desktopLabel}>Recycle Bin</span>
        </a>
        <Svg box="0 0 12 19" className="absolute right-[75px] top-[50px] w-3 h-[19px]">
          <path d="M.6.800v15.500l3.600-3.400 2.300 5.400 2.500-1-2.300-5.300h4.900z" fill="#fff" stroke="#333" strokeWidth=".7" />
        </Svg>
      </main>
      <Taskbar />
    </div>
  );
}
